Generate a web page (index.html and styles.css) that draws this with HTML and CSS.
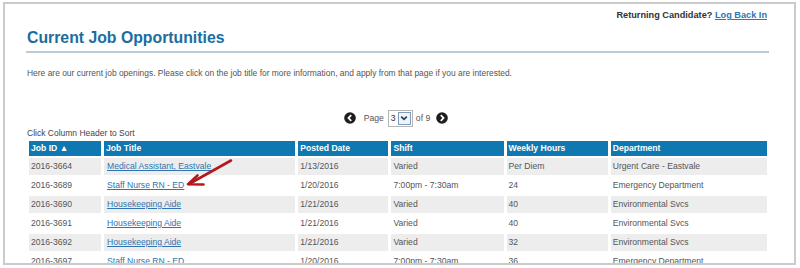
FILE: index.html
```html
<!DOCTYPE html>
<html>
<head>
<meta charset="utf-8">
<link rel="stylesheet" href="styles.css">
</head>
<body>
<div class="frame">
  <div class="topbar">Returning Candidate? <a href="#">Log Back In</a></div>
  <h1 class="title">Current Job Opportunities</h1>
  <p class="intro">Here are our current job openings. Please click on the job title for more information, and apply from that page if you are interested.</p>
  <div class="pager">
    <svg class="pbtn" viewBox="0 0 12 12" width="12" height="12"><circle cx="6" cy="6" r="5.8" fill="#1e1e1e"/><path d="M7.2 3.2 L4.5 6 L7.2 8.8" fill="none" stroke="#fff" stroke-width="1.8"/></svg>
    <span class="plabel">Page</span>
    <span class="select"><span class="sval">3</span><span class="sbtn"><svg viewBox="0 0 10 10" width="10" height="10"><path d="M2.2 3.6 L5 6.4 L7.8 3.6" fill="none" stroke="#1f3f66" stroke-width="1.6"/></svg></span></span>
    <span class="plabel">of 9</span>
    <svg class="pbtn" viewBox="0 0 12 12" width="12" height="12"><circle cx="6" cy="6" r="5.8" fill="#1e1e1e"/><path d="M4.8 3.2 L7.5 6 L4.8 8.8" fill="none" stroke="#fff" stroke-width="1.8"/></svg>
  </div>
  <div class="sortnote">Click Column Header to Sort</div>
  <table class="jobs">
    <colgroup><col class="c1"><col class="c2"><col class="c3"><col class="c4"><col class="c5"><col class="c6"></colgroup>
    <thead>
      <tr><th>Job ID &#9650;</th><th>Job Title</th><th>Posted Date</th><th>Shift</th><th>Weekly Hours</th><th>Department</th></tr>
    </thead>
    <tbody>
      <tr class="alt"><td>2016-3664</td><td><a href="#">Medical Assistant, Eastvale</a></td><td>1/13/2016</td><td>Varied</td><td>Per Diem</td><td>Urgent Care - Eastvale</td></tr>
      <tr><td>2016-3689</td><td><a href="#">Staff Nurse RN - ED</a></td><td>1/20/2016</td><td>7:00pm - 7:30am</td><td>24</td><td>Emergency Department</td></tr>
      <tr class="alt"><td>2016-3690</td><td><a href="#">Housekeeping Aide</a></td><td>1/21/2016</td><td>Varied</td><td>40</td><td>Environmental Svcs</td></tr>
      <tr><td>2016-3691</td><td><a href="#">Housekeeping Aide</a></td><td>1/21/2016</td><td>Varied</td><td>40</td><td>Environmental Svcs</td></tr>
      <tr class="alt"><td>2016-3692</td><td><a href="#">Housekeeping Aide</a></td><td>1/21/2016</td><td>Varied</td><td>32</td><td>Environmental Svcs</td></tr>
      <tr><td>2016-3697</td><td><a href="#">Staff Nurse RN - ED</a></td><td>1/20/2016</td><td>7:00pm - 7:30am</td><td>36</td><td>Emergency Department</td></tr>
    </tbody>
  </table>
  <svg class="annot" viewBox="180 150 60 45" width="60" height="45"><path d="M231 160.5 L189 184" fill="none" stroke="#b3191c" stroke-width="2.6" stroke-linecap="round"/><path d="M197.5 175.5 L188 184.2 L203.5 184.5" fill="none" stroke="#b3191c" stroke-width="2.6" stroke-linecap="round" stroke-linejoin="round"/></svg>
</div>
</body>
</html>
```

FILE: styles.css
```css
html, body {
  margin: 0;
  padding: 0;
  background: #fff;
}
body {
  font-family: "Liberation Sans", Arial, sans-serif;
  color: #555;
}
.frame {
  position: relative;
  margin: 2px 4px 0 3px;
  height: 259px;
  border: 2px solid #cbcbcb;
  overflow: hidden;
  padding: 0 24px 0 21px;
}
.topbar {
  text-align: right;
  font-size: 9.2px;
  font-weight: bold;
  color: #333;
  line-height: 12px;
  padding-top: 5px;
  padding-right: 3px;
}
.topbar a {
  color: #2b78b5;
}
.title {
  margin: 7px 0 0 0;
  padding: 0 0 3px 1px;
  font-size: 15.8px;
  line-height: 20px;
  font-weight: bold;
  color: #1b6d9f;
  border-bottom: 2px solid #b9cad8;
  margin-right: 1px;
}
.intro {
  margin: 15px 0 0 1px;
  font-size: 8.45px;
  line-height: 11px;
  color: #555;
}
.pager {
  margin-top: 30px;
  height: 18px;
  display: flex;
  align-items: center;
  justify-content: center;
  font-size: 8.6px;
  color: #555;
  padding-right: 4px;
}
.pbtn {
  display: block;
}
.plabel {
  margin: 0 4px 0 8px;
}
.plabel + .pbtn {
  margin-left: 2px;
}
.select {
  display: flex;
  align-items: center;
  height: 17px;
  box-sizing: border-box;
  border: 1px solid #b5b5b5;
  background: #fff;
  padding: 0 1px 0 2px;
}
.select + .plabel {
  margin-left: 3px;
}
.sval {
  width: 7px;
  color: #333;
}
.sbtn {
  display: flex;
  align-items: center;
  justify-content: center;
  width: 11px;
  height: 11px;
  border: 1px solid #7f9cba;
  background: #eef3f8;
}
.sbtn svg {
  display: block;
}
.sortnote {
  margin: 1px 0 0 1px;
  font-size: 8.5px;
  line-height: 11px;
  color: #444;
}
.jobs {
  width: 744px;
  border-collapse: separate;
  border-spacing: 3px 2px;
  table-layout: fixed;
  margin: 0;
  font-size: 8.6px;
}
.c1 { width: 72px; }
.c2 { width: 191px; }
.c3 { width: 90px; }
.c4 { width: 112px; }
.c5 { width: 101px; }
.c6 { width: 156px; }
.jobs th {
  background: #0f78b1;
  color: #fff;
  font-weight: bold;
  text-align: left;
  height: 15px;
  padding: 0 2px;
  line-height: 15px;
  white-space: nowrap;
}
.jobs td {
  height: 17px;
  padding: 0 2px 0 2px;
  line-height: 17px;
  color: #555;
  white-space: nowrap;
  overflow: hidden;
}
.jobs td:nth-child(2) {
  padding-left: 3px;
}
.jobs tr.alt td {
  background: #ededed;
}
.jobs td a {
  color: #2f73b0;
  text-decoration: underline;
}
.annot {
  position: absolute;
  left: 175px;
  top: 146px;
}
```
